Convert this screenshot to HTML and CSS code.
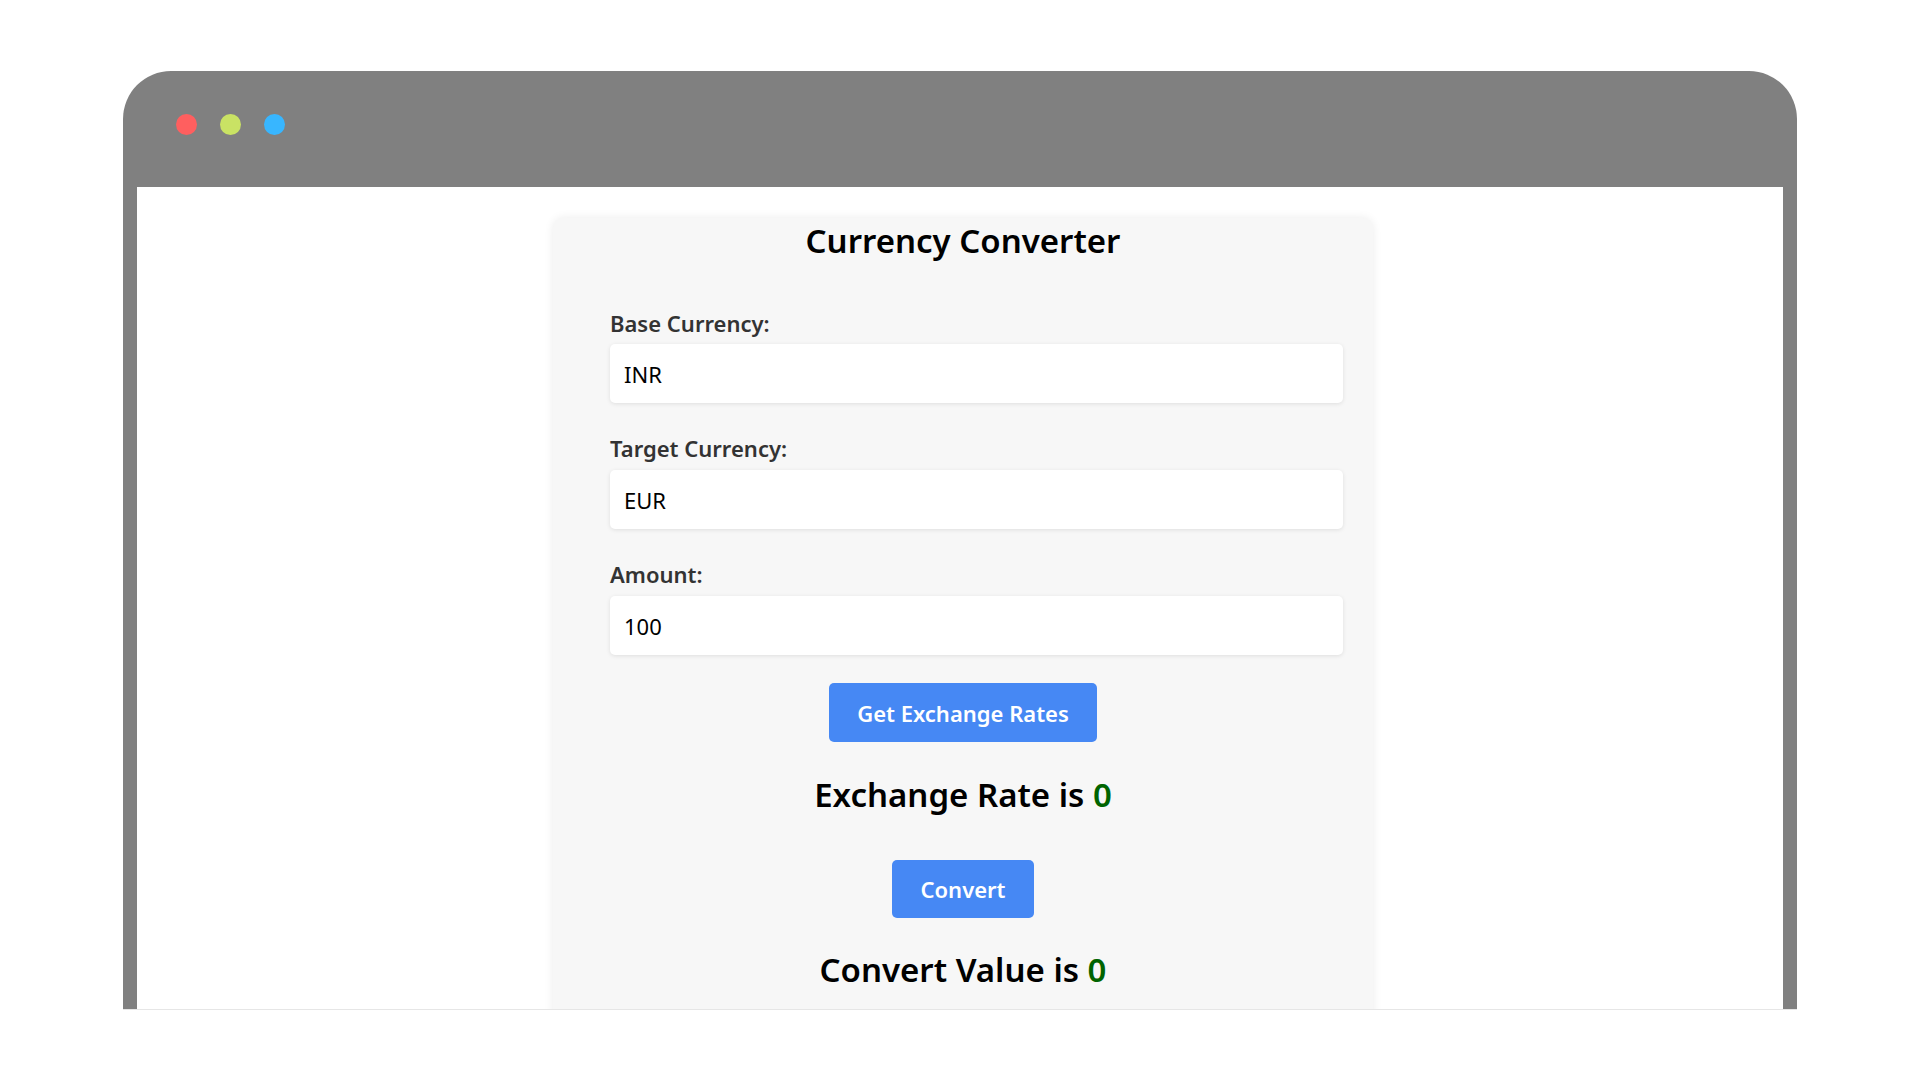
FILE: index.html
```html
<!DOCTYPE html>
<html lang="en">
<head>
<meta charset="utf-8">
<title>Currency Converter</title>
<link rel="stylesheet" href="styles.css">
</head>
<body>
<div class="stage">
  <div class="frame">
    <div class="titlebar">
      <span class="dot dot-red"></span>
      <span class="dot dot-yellow"></span>
      <span class="dot dot-blue"></span>
    </div>
    <div class="viewport">
      <div class="card">
        <h1 class="title">Currency Converter</h1>
        <div class="field">
          <label class="label" for="base">Base Currency:</label>
          <input class="input" id="base" type="text" value="INR">
        </div>
        <div class="field">
          <label class="label" for="target">Target Currency:</label>
          <input class="input" id="target" type="text" value="EUR">
        </div>
        <div class="field">
          <label class="label" for="amount">Amount:</label>
          <input class="input" id="amount" type="text" value="100">
        </div>
        <button class="btn btn-rates" type="button">Get Exchange Rates</button>
        <h2 class="result result-rate">Exchange Rate is <span class="value">0</span></h2>
        <button class="btn btn-convert" type="button">Convert</button>
        <h2 class="result result-value">Convert Value is <span class="value">0</span></h2>
      </div>
    </div>
  </div>
</div>
</body>
</html>
```
FILE: styles.css
```css
* { box-sizing: border-box; }
html, body { margin: 0; padding: 0; background: #ffffff; }
body {
  width: 1920px;
  height: 1080px;
  overflow: hidden;
  font-family: "Noto Sans", "Open Sans", "Liberation Sans", sans-serif;
}
.stage {
  padding: 71px 0 0 123px;
}
.frame {
  width: 1674px;
  height: 939px;
  background: #808080;
  border-radius: 48px 48px 0 0;
  padding: 0 14px;
  display: flex;
  flex-direction: column;
  border-bottom: 1px solid #e6e6e6;
}
.titlebar {
  height: 116px;
  flex: none;
  display: flex;
  align-items: center;
  gap: 23px;
  padding: 0 0 0 39px;
}
.dot {
  width: 21px;
  height: 21px;
  border-radius: 50%;
  display: block;
  margin-bottom: 10px;
}
.dot-red { background: #ff5f5f; }
.dot-yellow { background: #c9e264; }
.dot-blue { background: #38b6ff; }
.viewport {
  flex: 1;
  background: #ffffff;
  overflow: hidden;
  padding-top: 31px;
}
.card {
  width: 820px;
  margin: 0 auto;
  transform: translateX(3px);
  background: #f7f7f7;
  border-radius: 10px;
  box-shadow: 0 0 10px rgba(0, 0, 0, 0.08);
  padding: 1px 57px 40px;
  display: flex;
  flex-direction: column;
  align-items: center;
}
.title {
  margin: 0;
  font-size: 33px;
  line-height: 44px;
  font-weight: 600;
  color: #000;
}
.field {
  align-self: stretch;
  display: flex;
  flex-direction: column;
  margin-top: 45px;
}
.field + .field { margin-top: 30px; }
.label {
  font-size: 22px;
  line-height: 30px;
  font-weight: 600;
  color: #333333;
  margin-bottom: 6px;
}
.field + .field .label { margin-bottom: 7px; }
.input {
  width: 733px;
  height: 59px;
  border: none;
  border-radius: 5px;
  background: #ffffff;
  box-shadow: 0 1px 4px rgba(0, 0, 0, 0.1);
  padding: 0 14px;
  font-family: inherit;
  font-size: 22px;
  color: #000;
  outline: none;
}
.btn {
  border: none;
  border-radius: 5px;
  background: #4688f4;
  color: #ffffff;
  font-family: inherit;
  font-size: 22px;
  font-weight: 600;
  height: 59px;
  padding: 0 28px;
  cursor: pointer;
}
.btn-rates { margin-top: 28px; }
.btn-convert { margin-top: 45px; height: 58px; }
.result {
  margin: 33px 0 0;
  font-size: 33px;
  line-height: 40px;
  font-weight: 600;
  color: #000;
}
.result-value { margin-top: 32px; }
.value { color: #006400; }
```
